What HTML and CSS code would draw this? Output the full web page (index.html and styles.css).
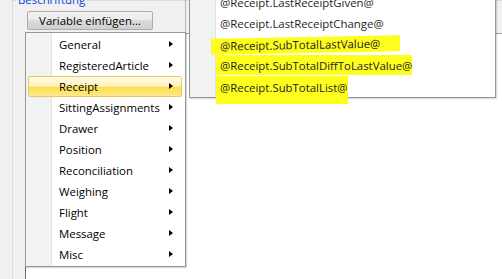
FILE: index.html
```html
<!DOCTYPE html>
<html lang="de">
<head>
  <meta charset="UTF-8">
  <title>Variable einfügen</title>
  <link rel="stylesheet" href="styles.css">
</head>
<body>
  <div class="window">
    <fieldset class="group">
      <legend>Beschriftung</legend>
      <div class="toolbar">
        <button class="btn">Variable einfügen...</button>
        <div class="toolbar-edge"></div>
      </div>
      <div class="editor"></div>
    </fieldset>

    <!-- Context menu opened from the button -->
    <ul class="menu main-menu">
      <li>General<span class="arrow"></span></li>
      <li>RegisteredArticle<span class="arrow"></span></li>
      <li class="active">Receipt<span class="arrow"></span></li>
      <li>SittingAssignments<span class="arrow"></span></li>
      <li>Drawer<span class="arrow"></span></li>
      <li>Position<span class="arrow"></span></li>
      <li>Reconciliation<span class="arrow"></span></li>
      <li>Weighing<span class="arrow"></span></li>
      <li>Flight<span class="arrow"></span></li>
      <li>Message<span class="arrow"></span></li>
      <li>Misc<span class="arrow"></span></li>
    </ul>

    <!-- Receipt submenu (scrolled, top is cut off) -->
    <ul class="menu sub-menu">
      <li>@Receipt.LastReceiptGiven@</li>
      <li>@Receipt.LastReceiptChange@</li>
      <li><span class="marker m1">@Receipt.SubTotalLastValue@</span></li>
      <li><span class="marker m2">@Receipt.SubTotalDiffToLastValue@</span></li>
      <li><span class="marker m3">@Receipt.SubTotalList@</span></li>
    </ul>
  </div>
</body>
</html>
```

FILE: styles.css
```css
/* Windows 7 look, Segoe-like font */
body {
  margin: 0;
  background-color: #f0f0f0;
  font-family: 'Open Sans', 'Noto Sans', sans-serif;
  font-size: 11.4px;
  color: #000000;
}

.window {
  position: relative;
  width: 502px;
  height: 279px;
  overflow: hidden;
}

.group {
  margin: -8px 0 0 12px;
  padding: 0;
  height: 300px;
  border: 1px solid #dcdcdc;
  border-right: none;
  display: flex;
  flex-direction: column;
}

.group legend {
  color: #0046d5;
  padding: 0 2px;
  margin-left: 3px;
  line-height: 16px;
}

.toolbar {
  display: flex;
  align-items: flex-start;
  height: 25px;
  padding-left: 14px;
}

.btn {
  margin-top: 3px;
  width: 126px;
  height: 19px;
  padding: 0;
  font-family: inherit;
  font-size: 11.4px;
  color: #000000;
  border: 1px solid #acacac;
  border-radius: 2px;
  background: linear-gradient(#f2f2f2, #ebebeb 50%, #dddddd 50%, #cfcfcf);
}

.toolbar-edge {
  margin-left: 32px;
  width: 1px;
  height: 33px;
  margin-top: -8px;
  background-color: #b4b4b4;
}

.editor {
  flex: 1;
  margin-left: 12px;
  background-color: #ffffff;
  border-left: 1px solid #6d6d6d;
  border-top: 1px solid #a0a0a0;
}

/* Menus */
.menu {
  position: absolute;
  list-style: none;
  margin: 0;
  padding: 1px;
  border: 1px solid #979797;
  background: linear-gradient(to right, #f1f2f2 25px, #e2e3e3 25px, #e2e3e3 26px, #ffffff 26px);
  box-shadow: 1px 1px 1px rgba(0, 0, 0, 0.15);
}

.menu li {
  position: relative;
  height: 21px;
  line-height: 21px;
  white-space: nowrap;
}

.main-menu {
  left: 25px;
  top: 32px;
  width: 157px;
}

.main-menu li {
  padding-left: 32px;
}

.main-menu li.active {
  margin: 0 2px 0 1px;
  padding-left: 30px;
  height: 19px;
  line-height: 19px;
  border: 1px solid #e8c867;
  border-radius: 2px;
  background: linear-gradient(#fffbe6, #fff3c0 45%, #ffdf50 55%, #ffe88a);
}

.arrow {
  position: absolute;
  right: 11px;
  top: 7px;
  width: 0;
  height: 0;
  border-top: 3.5px solid transparent;
  border-bottom: 3.5px solid transparent;
  border-left: 4px solid #000000;
}

.active .arrow {
  right: 8px;
  top: 6px;
}

.sub-menu {
  left: 189px;
  top: -10px;
  width: 303px;
  padding-bottom: 0;
  color: #1e1e1e;
}

.sub-menu li {
  padding-left: 29px;
}

/* hand drawn yellow highlighter */
.marker {
  position: relative;
  display: inline-block;
  line-height: 14px;
  background-color: #fdfd1e;
}

.m1 {
  margin-left: -9px;
  padding: 1px 20px 1px 9px;
  transform: skewY(-1deg);
}

.m2 {
  margin-left: -4px;
  padding: 4px 0 2px 4px;
}

.m3 {
  margin-left: -4px;
  padding: 5px 0 9px 4px;
}
```
